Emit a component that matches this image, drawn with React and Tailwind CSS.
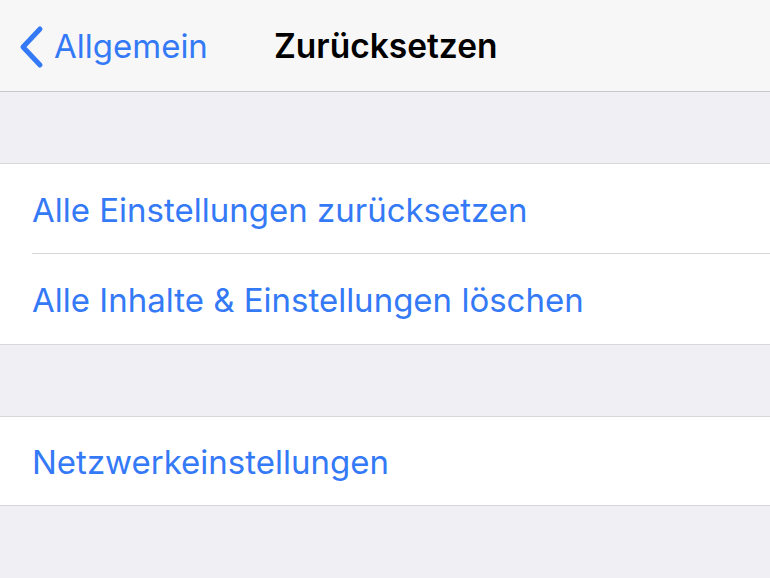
import React from 'react';

function Row({ label, divider, h = 'h-[90px]' }) {
  return (
    <div className="bg-white">
      <div className={`ml-[32px] ${h} flex items-center pt-[3px] ${divider ? 'border-b border-[#d8d8dc]' : ''}`}>
        <span className="text-[33px] leading-none text-[#3479f6]">{label}</span>
      </div>
    </div>
  );
}

export default function App() {
  return (
    <div className="w-[770px] h-[578px] overflow-hidden bg-[#efeff4]" style={{ fontFamily: 'Inter, "Noto Sans", sans-serif' }}>
      <div className="h-[92px] bg-[#f7f7f8] border-b border-[#c8c8cc] flex items-center relative">
        <div className="flex items-center pl-[18px] pt-[2px] text-[#3479f6]">
          <svg width="26" height="44" viewBox="0 0 26 44" fill="none">
            <path d="M22 4 L5 22 L22 40" stroke="#3479f6" strokeWidth="5" strokeLinecap="round" strokeLinejoin="round" />
          </svg>
          <span className="ml-[10px] text-[33px] leading-none">Allgemein</span>
        </div>
        <div className="absolute left-[274px] top-0 h-full flex items-center pt-[2px]">
          <span className="text-[33.5px] font-semibold text-black leading-none">Zurücksetzen</span>
        </div>
      </div>
      <div className="h-[71px]" />
      <div className="border-t border-b border-[#d8d8dc]">
        <Row label="Alle Einstellungen zurücksetzen" divider />
        <Row label="Alle Inhalte & Einstellungen löschen" />
      </div>
      <div className="h-[71px]" />
      <div className="border-t border-b border-[#d8d8dc]">
        <Row label="Netzwerkeinstellungen" h="h-[88px]" />
      </div>
    </div>
  );
}
